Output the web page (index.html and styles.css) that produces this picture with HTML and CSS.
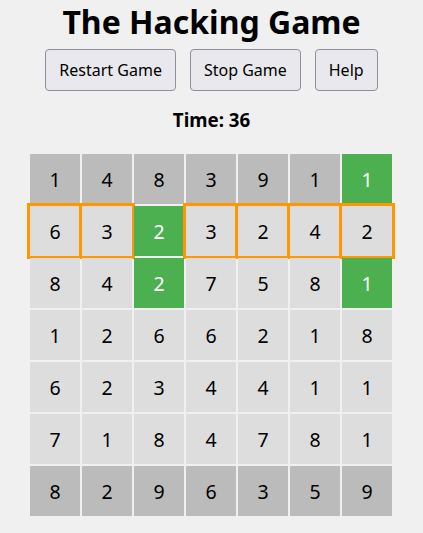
FILE: index.html
```html
<!DOCTYPE html>
<html>
<head>
<meta charset="utf-8">
<link rel="stylesheet" href="styles.css">
</head>
<body>
<h1 class="title">The Hacking Game</h1>
<div class="controls">
  <button class="btn">Restart Game</button>
  <button class="btn">Stop Game</button>
  <button class="btn">Help</button>
</div>
<div class="timer">Time: 36</div>
<div class="grid">
  <div class="cell dark">1</div><div class="cell dark">4</div><div class="cell dark">8</div><div class="cell dark">3</div><div class="cell dark">9</div><div class="cell dark">1</div><div class="cell green">1</div>
  <div class="cell sel">6</div><div class="cell sel">3</div><div class="cell green">2</div><div class="cell sel">3</div><div class="cell sel">2</div><div class="cell sel">4</div><div class="cell sel">2</div>
  <div class="cell">8</div><div class="cell">4</div><div class="cell green">2</div><div class="cell">7</div><div class="cell">5</div><div class="cell">8</div><div class="cell green">1</div>
  <div class="cell">1</div><div class="cell">2</div><div class="cell">6</div><div class="cell">6</div><div class="cell">2</div><div class="cell">1</div><div class="cell">8</div>
  <div class="cell">6</div><div class="cell">2</div><div class="cell">3</div><div class="cell">4</div><div class="cell">4</div><div class="cell">1</div><div class="cell">1</div>
  <div class="cell">7</div><div class="cell">1</div><div class="cell">8</div><div class="cell">4</div><div class="cell">7</div><div class="cell">8</div><div class="cell">1</div>
  <div class="cell dark">8</div><div class="cell dark">2</div><div class="cell dark">9</div><div class="cell dark">6</div><div class="cell dark">3</div><div class="cell dark">5</div><div class="cell dark">9</div>
</div>
</body>
</html>
```
FILE: styles.css
```css
html, body {
  margin: 0;
  padding: 0;
  background: #f0f0f0;
  font-family: "Noto Sans", "Open Sans", sans-serif;
  color: #000;
}
body {
  display: flex;
  flex-direction: column;
  align-items: center;
}
.title {
  font-size: 32px;
  font-weight: bold;
  margin: 0;
  line-height: 44px;
}
.controls {
  display: flex;
  gap: 14px;
  margin-top: 5px;
}
.btn {
  font-family: inherit;
  font-size: 16px;
  height: 42px;
  padding: 0 13px;
  background: #e9e9ed;
  border: 1px solid #8f8f9d;
  border-radius: 4px;
  color: #000;
}
.timer {
  font-size: 18.72px;
  font-weight: bold;
  margin-top: 16px;
  line-height: 26px;
}
.grid {
  display: grid;
  grid-template-columns: repeat(7, 50px);
  grid-auto-rows: 50px;
  gap: 2px;
  margin-top: 21px;
  margin-right: 1px;
}
.cell {
  background: #dddddd;
  display: flex;
  align-items: center;
  justify-content: center;
  font-size: 19.5px;
}
.cell.dark { background: #bbbbbb; }
.cell.green { background: #4caf50; color: #fff; }
.cell.sel { outline: 3px solid #ff9800; }
```
